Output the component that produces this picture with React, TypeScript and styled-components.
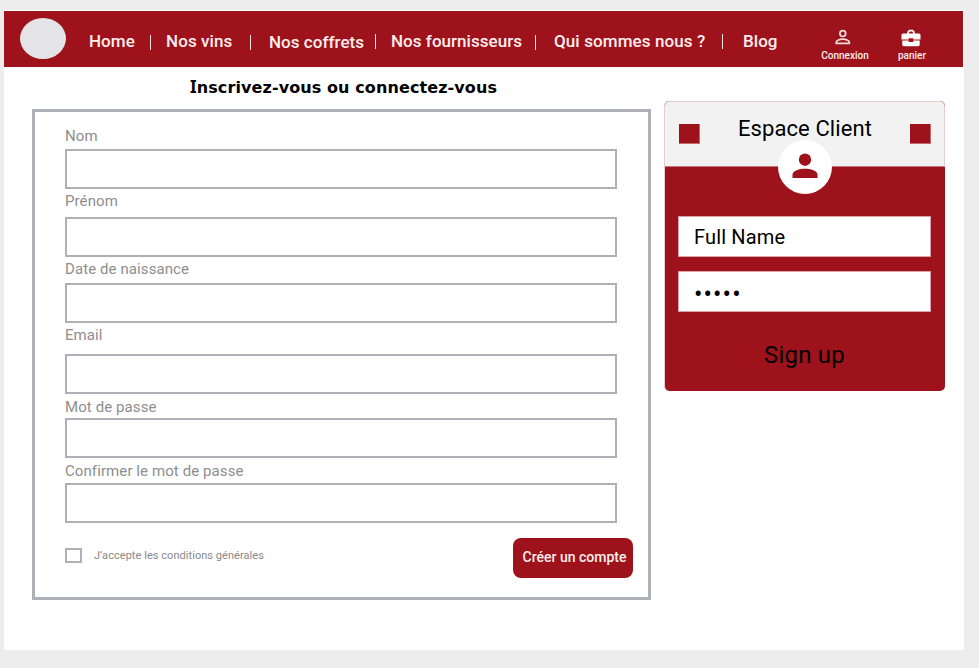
import React from "react";
import styled, { createGlobalStyle } from "styled-components";

const RED = "#9d121b";
const GREY = "#afafb8";

const GlobalStyle = createGlobalStyle`
  * { box-sizing: border-box; }
  body { margin: 0; background: #ededed; font-family: Roboto, "Liberation Sans", sans-serif; }
  input, button { font-family: inherit; outline: none; }
`;

const Page = styled.div`
  width: 960px;
  height: 640px;
  margin: 10px 0 0 4px;
  padding-top: 1px;
  background: #fff;
  display: flow-root;
`;

const Header = styled.header`
  display: flex;
  width: 959px;
  height: 56px;
  background: ${RED};
  color: #fdeeee;
`;

const Logo = styled.div`
  width: 46px;
  height: 41px;
  margin: 7px 0 0 16px;
  border-radius: 50%;
  background: #e4e4e6;
  flex: none;
`;

const Nav = styled.nav`
  display: flex;
  width: 750px;
  flex: none;
`;

const NavLink = styled.a<{ $gap: number; $width: number; $drop?: number; $track?: number }>`
  flex: none;
  width: ${(p) => p.$width}px;
  margin: ${(p) => 20 + (p.$drop ?? 0)}px 0 0 ${(p) => p.$gap}px;
  font-size: 17px;
  line-height: 20px;
  font-weight: 500;
  letter-spacing: ${(p) => p.$track ?? 0.04}px;
  white-space: nowrap;
`;

const Separator = styled.span<{ $gap: number; $top: number }>`
  flex: none;
  width: 1px;
  height: 15px;
  margin: ${(p) => p.$top}px 0 0 ${(p) => p.$gap}px;
  background: #f7e4e5;
`;

const Action = styled.a<{ $width: number; $gap: number; $shift: number }>`
  display: flex;
  flex: none;
  flex-direction: column;
  align-items: center;
  width: ${(p) => p.$width}px;
  margin-left: ${(p) => p.$gap}px;
  padding-top: 17px;
  font-size: 10px;
  line-height: 12px;
  font-weight: 500;
  white-space: nowrap;

  svg { display: block; height: 22px; margin-right: ${(p) => p.$shift}px; }
`;

const Main = styled.main`
  display: flex;
  align-items: flex-start;
`;

const SignupColumn = styled.section`
  width: 619px;
  margin-left: 28px;
`;

const Title = styled.h1`
  height: 42px;
  margin: 0;
  padding: 8px 0 0 158px;
  font-family: "DejaVu Sans", sans-serif;
  font-size: 16px;
  line-height: 24px;
  font-weight: 700;
  letter-spacing: 0.1px;
  color: #000;
  white-space: nowrap;

  &::first-letter {
    font-family: "Noto Sans", sans-serif;
    font-size: 17px;
    font-weight: 700;
  }
`;

const SignupForm = styled.form`
  height: 491px;
  padding: 14px 15px 0 30px;
  border: 3px solid ${GREY};
`;

const Field = styled.label<{ $label: number; $after: number }>`
  display: flex;
  flex-direction: column;
  margin-bottom: ${(p) => p.$after}px;

  span {
    height: ${(p) => p.$label}px;
    font-size: 15px;
    line-height: 20px;
    letter-spacing: 0.09px;
    color: #8e8e8e;
  }
`;

const TextInput = styled.input`
  width: 552px;
  height: 40px;
  padding: 0 10px;
  border: 2px solid ${GREY};
  background: #fff;
`;

const FormFooter = styled.div`
  display: flex;
  justify-content: space-between;
`;

const Terms = styled.label`
  display: flex;
  align-items: flex-start;
  margin-top: 10px;
  gap: 12px;
  font-size: 11px;
  line-height: 15px;
  letter-spacing: 0.05px;
  color: #898989;
`;

const Checkbox = styled.input`
  appearance: none;
  width: 17px;
  height: 15px;
  margin: 0;
  border: 2px solid ${GREY};
`;

const SubmitButton = styled.button`
  width: 120px;
  height: 40px;
  padding: 0 0 2px 3px;
  border: 0;
  border-radius: 8px;
  background: ${RED};
  color: #fdeeee;
  font-size: 14px;
  font-weight: 500;
  white-space: nowrap;
`;

const ClientCard = styled.aside`
  width: 281px;
  height: 290px;
  margin: 34px 0 0 13px;
  border-radius: 5px;
  border-left: 1px solid #e8cccf;
  background: ${RED};
  overflow: hidden;
`;

const CardHead = styled.div`
  position: relative;
  display: flex;
  justify-content: space-between;
  height: 66px;
  padding: 22px 13px 0 14px;
  border: 1px solid #e8cccf;
  border-left: 0;
  border-bottom-color: #c2777c;
  border-radius: 4px 5px 0 0;
  background: #f2f2f2;
`;

const Square = styled.span`
  width: 21px;
  height: 20px;
  border: 1px solid #bd686e;
  border-width: 0 1px 1px 0;
  background: ${RED};
`;

const CardTitle = styled.h2`
  margin: -10px 0 0;
  font-size: 22px;
  line-height: 30px;
  font-weight: 400;
  letter-spacing: 0.1px;
  color: #000;
`;

const Avatar = styled.div`
  position: absolute;
  left: 113px;
  top: 38px;
  display: grid;
  place-items: center;
  width: 54px;
  height: 54px;
  padding-bottom: 2px;
  border-radius: 50%;
  background: #fff;
`;

const CardBody = styled.form`
  display: flex;
  flex-direction: column;
  gap: 14px;
  padding: 49px 14px 0 13px;
`;

const CardInput = styled.div<{ $dots?: boolean }>`
  height: 41px;
  padding-left: 15px;
  padding-top: ${(p) => (p.$dots ? 4 : 1)}px;
  border: 1px solid #d7a1a5;
  background: #fff;
  color: #000;
  font-size: ${(p) => (p.$dots ? 25 : 20)}px;
  line-height: 38px;
  letter-spacing: ${(p) => (p.$dots ? 1.1 : 0.15)}px;
`;

const SignUp = styled.button`
  margin-top: 13px;
  padding: 0;
  border: 0;
  background: none;
  color: #000;
  font-size: 24px;
  line-height: 32px;
  letter-spacing: 0.2px;
`;

const FIELDS = [
  { name: "Nom", label: 23, after: 2 },
  { name: "Prénom", label: 26, after: 2 },
  { name: "Date de naissance", label: 24, after: 2 },
  { name: "Email", label: 29, after: 3 },
  { name: "Mot de passe", label: 21, after: 3 },
  { name: "Confirmer le mot de passe", label: 22, after: 15 },
];

export default function App() {
  return (
    <>
      <GlobalStyle />
      <Page>
        <Header>
          <Logo />
          <Nav>
            <NavLink $gap={23} $width={61}>Home</NavLink>
            <Separator $gap={0} $top={24} />
            <NavLink $gap={15} $width={84} $track={0.1}>Nos vins</NavLink>
            <Separator $gap={0} $top={24} />
            <NavLink $gap={18} $width={106} $drop={1}>Nos coffrets</NavLink>
            <Separator $gap={0} $top={23} />
            <NavLink $gap={15} $width={144}>Nos fournisseurs</NavLink>
            <Separator $gap={0} $top={24} />
            <NavLink $gap={18} $width={168} $track={0.1}>Qui sommes nous ?</NavLink>
            <Separator $gap={0} $top={23} />
            <NavLink $gap={20} $width={40}>Blog</NavLink>
          </Nav>
          <Action $gap={0} $width={58} $shift={4}>
            <svg width="16" height="22" viewBox="0 0 16 22" fill="none" stroke="#f3dcdd" strokeWidth="1.7">
              <circle cx="7.8" cy="5.6" r="2.9" />
              <path d="M1.300 15.300v-1.200c0-1.900 3.700-2.900 6.500-2.900s6.500 1 6.500 2.900v1.200z" />
            </svg>
            Connexion
          </Action>
          <Action $gap={14} $width={48} $shift={3}>
            <svg width="20" height="22" viewBox="0 0 20 22">
              <path d="M7.200 6V4l1.200-1.300h3.200L12.800 4v2" fill="none" stroke="#fff" strokeWidth="1.8" />
              <path d="M2 5.500h16q1.500 0 1.500 1.500v4.500h-7.200V10.300H7.700v1.200H.5V7q0-1.500 1.500-1.500zM1.300 12.500h6.400v1.400h4.600v-1.400h6.400v4.300q0 1.400-1.400 1.400H2.700q-1.400 0-1.400-1.400z" fill="#fff" />
            </svg>
            panier
          </Action>
        </Header>
        <Main>
          <SignupColumn>
            <Title>Inscrivez-vous ou connectez-vous</Title>
            <SignupForm>
              {FIELDS.map((f) => (
                <Field key={f.name} $label={f.label} $after={f.after}>
                  <span>{f.name}</span>
                  <TextInput />
                </Field>
              ))}
              <FormFooter>
                <Terms>
                  <Checkbox type="checkbox" />
                  J’accepte les conditions générales
                </Terms>
                <SubmitButton type="button">Créer un compte</SubmitButton>
              </FormFooter>
            </SignupForm>
          </SignupColumn>
          <ClientCard>
            <CardHead>
              <Square />
              <CardTitle>Espace Client</CardTitle>
              <Square />
              <Avatar>
                <svg width="26" height="26" viewBox="0 0 26 26" fill={RED}>
                  <circle cx="13" cy="6.700" r="6.200" />
                  <path d="M.5 25v-3.300C.5 17.600 7.500 15.700 13 15.700s12.500 1.900 12.500 6V25z" />
                </svg>
              </Avatar>
            </CardHead>
            <CardBody>
              <CardInput>Full Name</CardInput>
              <CardInput $dots>•••••</CardInput>
              <SignUp type="button">Sign up</SignUp>
            </CardBody>
          </ClientCard>
        </Main>
      </Page>
    </>
  );
}
